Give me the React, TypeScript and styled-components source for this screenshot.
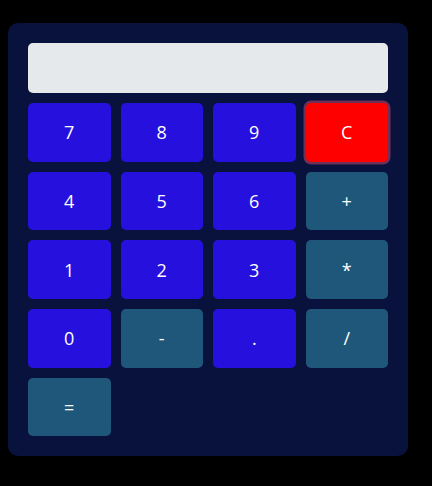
import React from "react";
import styled, { createGlobalStyle } from "styled-components";

const Global = createGlobalStyle`
  html, body { background: #000; }
  body { margin: 8px; font-family: "Open Sans", "Noto Sans", sans-serif; }
`;

const Panel = styled.div`
  box-sizing: border-box;
  width: 400px;
  margin-top: 15px;
  padding: 20px;
  background: #09123c;
  border-radius: 10px;
  display: flex;
  flex-direction: column;
  gap: 10px;
`;

const Display = styled.input`
  box-sizing: border-box;
  width: 360px;
  height: 50px;
  border: none;
  border-radius: 5px;
  background: #e5e9ec;
  font-family: inherit;
  font-size: 20px;
  padding: 0 12px;
  outline: none;
`;

const Grid = styled.div`
  display: grid;
  grid-template-columns: repeat(4, 1fr);
  grid-auto-rows: 58.7px;
  gap: 10px;
`;

type Kind = "digit" | "op" | "clear";

const colors: Record<Kind, string> = {
  digit: "#2610de",
  op: "#1f577b",
  clear: "#ff0000",
};

const Key = styled.button<{ $kind: Kind; $focus?: boolean }>`
  border: none;
  border-radius: 5px;
  background: ${(p) => colors[p.$kind]};
  color: #fff;
  font-family: "Open Sans", "Noto Sans", sans-serif;
  font-size: 18px;
  display: flex;
  align-items: center;
  justify-content: center;
  padding: 0;
  cursor: pointer;
  box-shadow: ${(p) => (p.$focus ? "0 0 0 2.5px #6e3056" : "none")};
`;

const keys: { label: string; kind: Kind; focus?: boolean }[] = [
  { label: "7", kind: "digit" },
  { label: "8", kind: "digit" },
  { label: "9", kind: "digit" },
  { label: "C", kind: "clear", focus: true },
  { label: "4", kind: "digit" },
  { label: "5", kind: "digit" },
  { label: "6", kind: "digit" },
  { label: "+", kind: "op" },
  { label: "1", kind: "digit" },
  { label: "2", kind: "digit" },
  { label: "3", kind: "digit" },
  { label: "*", kind: "op" },
  { label: "0", kind: "digit" },
  { label: "-", kind: "op" },
  { label: ".", kind: "digit" },
  { label: "/", kind: "op" },
  { label: "=", kind: "op" },
];

export default function App() {
  return (
    <>
      <Global />
      <Panel>
        <Display readOnly value="" />
        <Grid>
          {keys.map((k) => (
            <Key key={k.label} $kind={k.kind} $focus={k.focus}>
              {k.label}
            </Key>
          ))}
        </Grid>
      </Panel>
    </>
  );
}
